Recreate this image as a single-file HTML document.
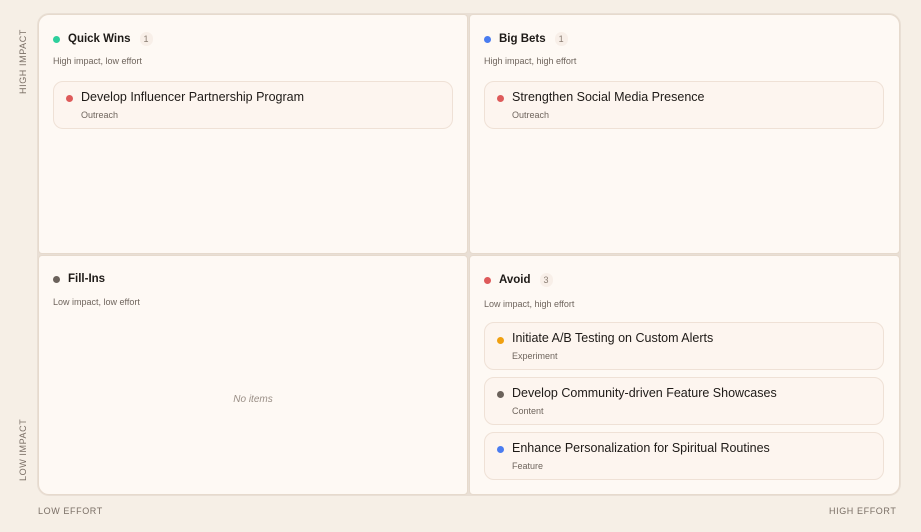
<!DOCTYPE html>
<html><head><style>
*{margin:0;padding:0;box-sizing:border-box}
body{width:921px;height:532px;background:#f6efe6;font-family:"Liberation Sans",sans-serif;position:relative;overflow:hidden;color:#1e1a17}
.grid{position:absolute;left:37px;top:13px;width:864px;height:483px;background:#e9dfd5;border-radius:12px;}
.q{position:absolute;background:#fef9f4;border:1px solid #e6dacd;}
.q1{left:1px;top:1px;width:430px;height:240px;border-radius:11px 4px 4px 4px}
.q2{left:432px;top:1px;width:431px;height:240px;border-radius:4px 11px 4px 4px}
.q3{left:1px;top:242px;width:430px;height:240px;border-radius:4px 4px 4px 11px}
.q4{left:432px;top:242px;width:431px;height:240px;border-radius:4px 4px 11px 4px}
.hd{position:absolute;left:14px;top:17px;display:flex;align-items:center;font-size:11.5px;font-weight:bold}
.dot{width:7px;height:7px;border-radius:50%;display:inline-block;margin-right:8px}
.cnt{font-weight:normal;font-size:9px;color:#8a7d72;margin-left:9px;background:#f8efe8;border-radius:8px;padding:2px 4px}
.sub{position:absolute;left:14px;top:41px;font-size:9px;color:#6f655d}
.card{position:absolute;left:14px;width:400px;height:48px;background:#fdf5ef;border:1px solid #efe1d6;border-radius:10px}
.card .d{position:absolute;left:12px;top:13px;width:7px;height:7px;border-radius:50%}
.card .t{position:absolute;left:27px;top:8px;font-size:12.5px;color:#1e1a17}
.card .s{position:absolute;left:27px;top:28px;font-size:9px;color:#6f655d}
.ax{position:absolute;font-size:9px;letter-spacing:0.6px;color:#7a6f66}
.v{transform:rotate(-90deg);transform-origin:left top}
</style></head><body>
<div class="ax v" style="left:18px;top:94px">HIGH IMPACT</div>
<div class="ax v" style="left:18px;top:481px">LOW IMPACT</div>
<div class="ax" style="left:38px;top:506px">LOW EFFORT</div>
<div class="ax" style="left:829px;top:506px">HIGH EFFORT</div>
<div class="grid">
<div class="q q1">
 <div class="hd"><span class="dot" style="background:#2ecf9c"></span>Quick Wins<span class="cnt">1</span></div>
 <div class="sub">High impact, low effort</div>
 <div class="card" style="top:66px"><span class="d" style="background:#de5a5a"></span><div class="t">Develop Influencer Partnership Program</div><div class="s">Outreach</div></div>
</div>
<div class="q q2">
 <div class="hd"><span class="dot" style="background:#4a7cf0"></span>Big Bets<span class="cnt">1</span></div>
 <div class="sub">High impact, high effort</div>
 <div class="card" style="top:66px"><span class="d" style="background:#de5a5a"></span><div class="t">Strengthen Social Media Presence</div><div class="s">Outreach</div></div>
</div>
<div class="q q3">
 <div class="hd"><span class="dot" style="background:#6b625b"></span>Fill-Ins</div>
 <div class="sub">Low impact, low effort</div>
 <div style="position:absolute;left:0;width:100%;top:138px;text-align:center;font-size:10px;font-style:italic;color:#9a8f86">No items</div>
</div>
<div class="q q4">
 <div class="hd"><span class="dot" style="background:#de5a5a"></span>Avoid<span class="cnt">3</span></div>
 <div class="sub" style="top:43px">Low impact, high effort</div>
 <div class="card" style="top:66px"><span class="d" style="background:#f0a010;top:14px"></span><div class="t">Initiate A/B Testing on Custom Alerts</div><div class="s">Experiment</div></div>
 <div class="card" style="top:121px"><span class="d" style="background:#6b625b"></span><div class="t">Develop Community-driven Feature Showcases</div><div class="s">Content</div></div>
 <div class="card" style="top:176px"><span class="d" style="background:#4a7cf0"></span><div class="t">Enhance Personalization for Spiritual Routines</div><div class="s">Feature</div></div>
</div>
</div>
</body></html>
